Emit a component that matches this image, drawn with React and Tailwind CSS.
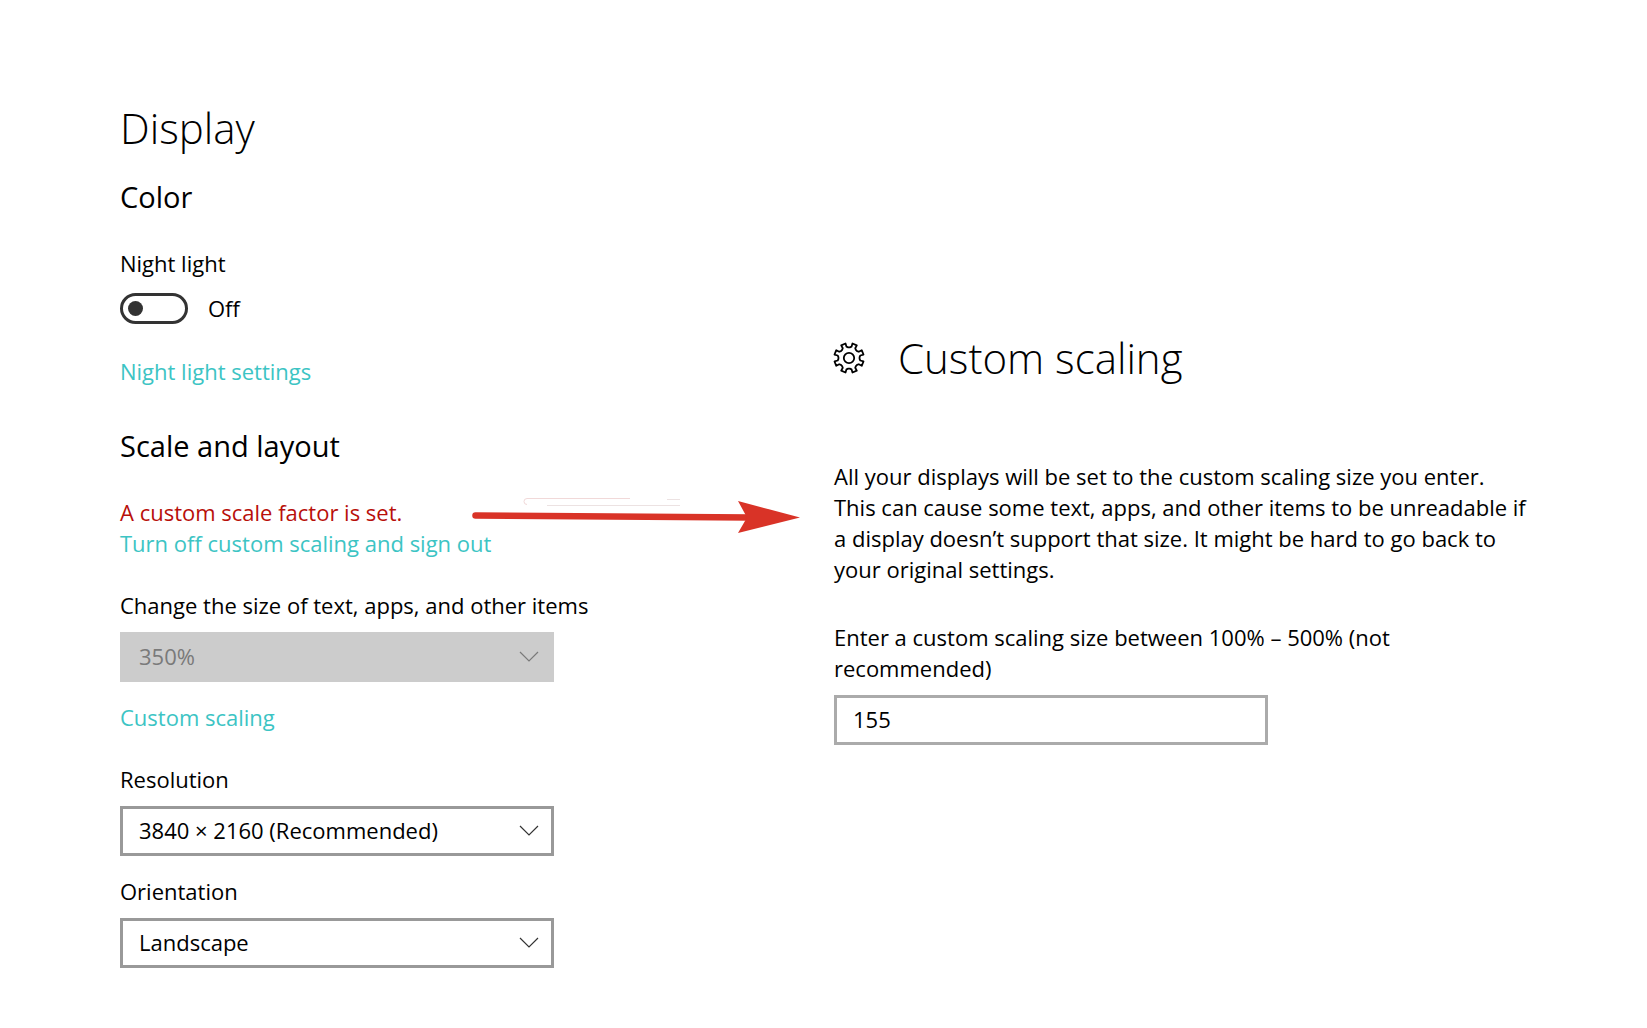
import { useState } from 'react';

const linkClass = 'text-[#3cc4c4] hover:text-gray-500';

const Chevron = ({ className }) => (
  <svg
    viewBox="0 0 20 12"
    fill="none"
    stroke="currentColor"
    strokeWidth="1.2"
    className={`pointer-events-none absolute top-[18px] right-[15px] h-3 w-5 ${className}`}
  >
    <path d="M1 2l9 9 9-9" />
  </svg>
);

const SelectField = ({ id, label, options, disabled = false }) => (
  <div className="flex flex-col gap-[11px]">
    <label htmlFor={id}>{label}</label>
    <div className="relative w-[434px]">
      <select
        id={id}
        disabled={disabled}
        className="block h-[50px] w-full appearance-none border-3 border-[#999999] bg-white pr-12 pb-0.5 pl-4 disabled:border-[#cccccc] disabled:bg-[#cccccc] disabled:text-[#7a7a7a] disabled:opacity-100"
      >
        {options.map((option) => (
          <option key={option}>{option}</option>
        ))}
      </select>
      <Chevron className={disabled ? 'text-[#7a7a7a]' : 'text-[#333333]'} />
    </div>
  </div>
);

const TEETH = 8;

// Outline of the settings cog, two outer and two inner points per tooth
const gearPath = () => {
  const points = [];
  for (let i = 0; i < TEETH; i++) {
    const mid = (i + 0.5) * (360 / TEETH);
    [
      [-18, 10.6],
      [-10, 11.6],
      [-9, 14.9],
      [9, 14.9],
      [10, 11.6],
      [18, 10.6],
    ].forEach(([offset, radius]) => {
      const angle = ((mid + offset) * Math.PI) / 180;
      points.push(`${(15 + radius * Math.cos(angle)).toFixed(2)} ${(16 + radius * Math.sin(angle)).toFixed(2)}`);
    });
  }
  return `M${points.join('L')}Z`;
};

const GearIcon = () => (
  <svg
    viewBox="0 0 32 32"
    fill="none"
    stroke="black"
    strokeWidth="1.8"
    strokeLinejoin="round"
    className="h-8 w-8 overflow-visible"
  >
    <path d={gearPath()} />
    <circle cx="15" cy="16" r="5.2" />
  </svg>
);

const Arrow = () => (
  <svg viewBox="0 0 330 48" fill="none" className="absolute -top-1 left-[352px] h-12 w-[330px]">
    <path d="M3.5 22.5L278 24.5" stroke="#d93327" strokeWidth="6.5" strokeLinecap="round" />
    <path d="M266 8L328 24.5L266 40L275 24.5Z" fill="#d93327" />
    <path d="M158 5.5H55q-3 0-3 3t3 3" stroke="#f1d9d9" />
    <path d="M75 12.5H208M195 6.5H208" stroke="#ece2e2" />
  </svg>
);

const DisplaySettings = () => {
  const [nightLight, setNightLight] = useState(false);

  return (
    <section className="w-[714px] shrink-0">
      <h1 className="mb-[21px] text-[42px] leading-14 font-light">Display</h1>
      <h2 className="mb-[31px] text-[29px] leading-10">Color</h2>

      <label htmlFor="night-light" className="mb-[14px] block">
        Night light
      </label>
      <div className="mb-8 flex items-center gap-5">
        <input
          id="night-light"
          type="checkbox"
          role="switch"
          checked={nightLight}
          onChange={(e) => setNightLight(e.target.checked)}
          className="flex h-[31px] w-[68px] appearance-none items-center rounded-full border-3 border-[#333333] px-[5px] before:size-[15px] before:rounded-full before:bg-[#333333] checked:justify-end"
        />
        <span>{nightLight ? 'On' : 'Off'}</span>
      </div>
      <a href="#night-light-settings" className={linkClass}>
        Night light settings
      </a>

      <h2 className="mt-[39px] mb-[31px] text-[29px] leading-10">Scale and layout</h2>
      <div className="relative mb-[31px]">
        <p className="text-[#b80f0a]">A custom scale factor is set.</p>
        <a href="#turn-off" className={linkClass}>
          Turn off custom scaling and sign out
        </a>
        <Arrow />
      </div>

      <SelectField id="scale" label="Change the size of text, apps, and other items" options={['350%']} disabled />
      <div className="mt-5 mb-[31px]">
        <a href="#custom-scaling" className={linkClass}>
          Custom scaling
        </a>
      </div>
      <div className="flex flex-col gap-5">
        <SelectField id="resolution" label="Resolution" options={['3840 × 2160 (Recommended)', '2560 × 1440', '1920 × 1080']} />
        <SelectField id="orientation" label="Orientation" options={['Landscape', 'Portrait']} />
      </div>
    </section>
  );
};

const CustomScaling = () => {
  const [size, setSize] = useState('155');

  return (
    <section className="max-w-[692px] flex-1 pt-[230px]">
      <div className="mb-[75px] flex items-center gap-8">
        <GearIcon />
        <h1 className="text-[42px] leading-14 font-light">Custom scaling</h1>
      </div>
      <p className="mb-[37px]">
        All your displays will be set to the custom scaling size you enter. This can cause some text, apps, and other
        items to be unreadable if a display doesn’t support that size. It might be hard to go back to your original
        settings.
      </p>
      <label htmlFor="custom-size" className="mb-[11px] block max-w-[600px]">
        Enter a custom scaling size between 100% – 500% (not recommended)
      </label>
      <input
        id="custom-size"
        type="text"
        value={size}
        onChange={(e) => setSize(e.target.value)}
        className="block h-[50px] w-[434px] border-3 border-[#ababab] px-4 pb-0.5"
      />
    </section>
  );
};

const App = () => (
  <main className="flex min-h-screen bg-white pt-[100px] pb-[59px] pl-[120px] font-['Open_Sans','Noto_Sans',sans-serif] text-[22px] leading-[31px] text-black">
    <DisplaySettings />
    <CustomScaling />
  </main>
);

export default App;
